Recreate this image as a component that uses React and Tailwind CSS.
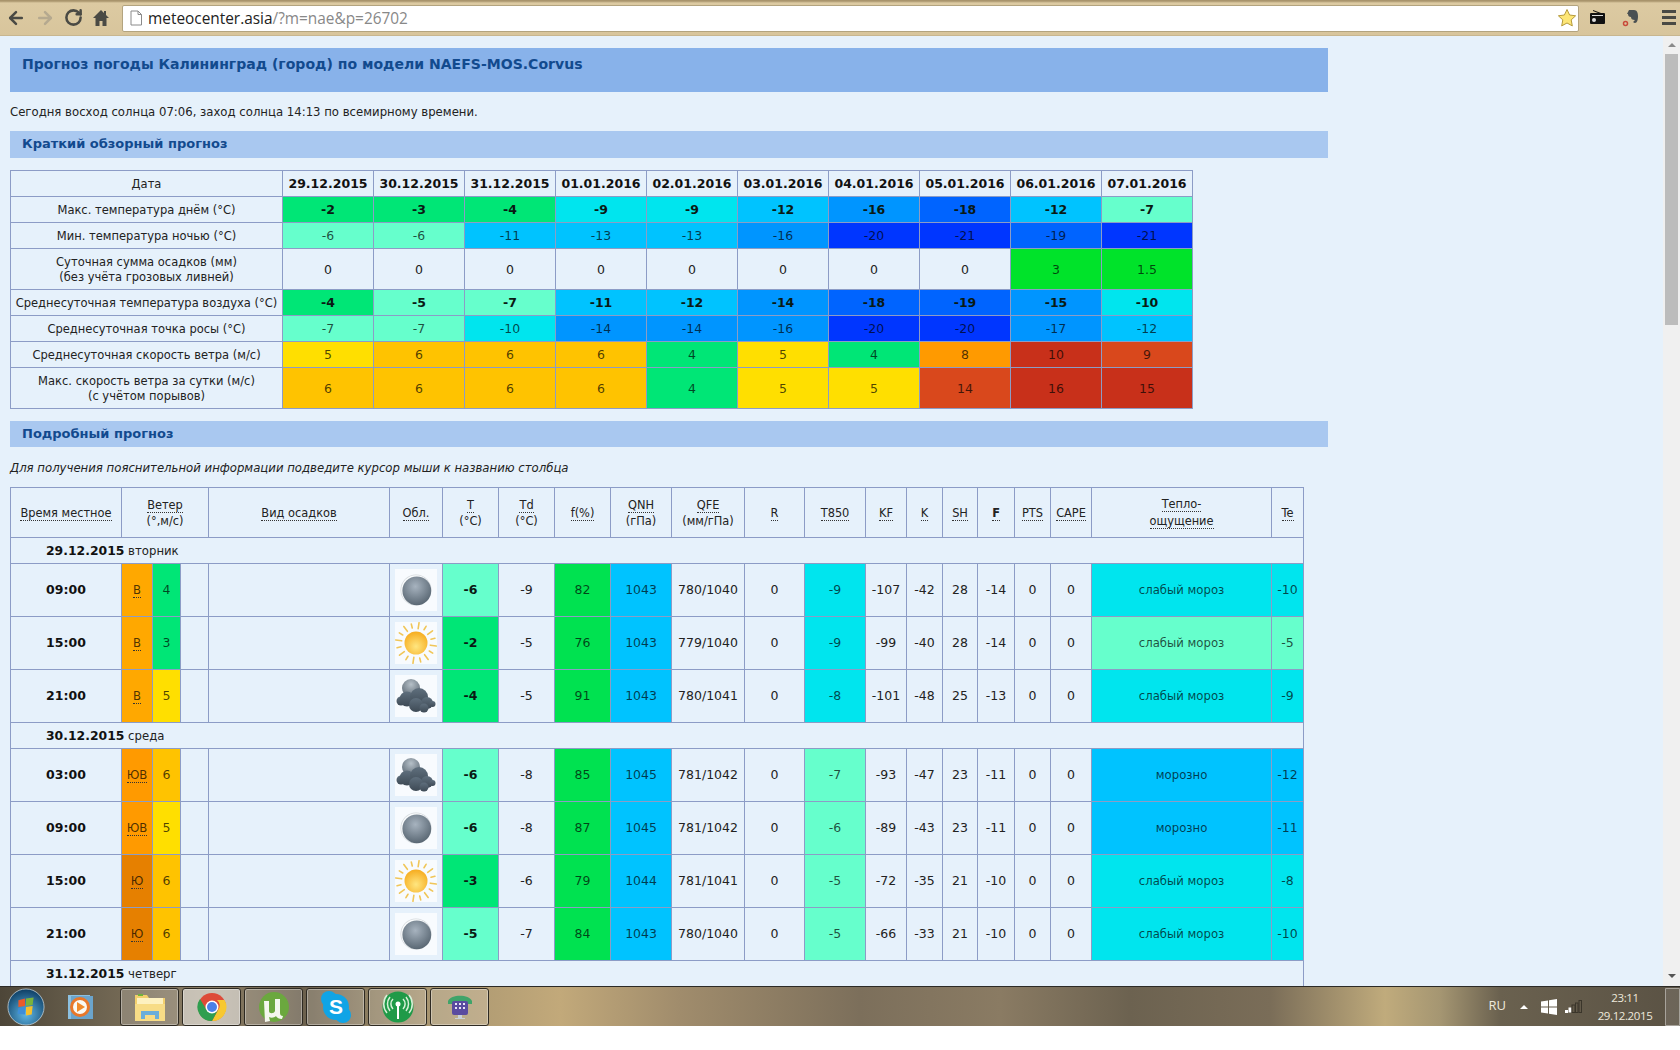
import React from 'react';
import { ArrowLeft, ArrowRight, RotateCw } from 'lucide-react';

const c = {
  g: 'bg-[#00e676]',
  a: 'bg-[#66ffcc]',
  n: 'bg-[#00e5ee]',
  s: 'bg-[#00c3ff]',
  b1: 'bg-[#0095ff]',
  b2: 'bg-[#0064ff]',
  nv: 'bg-[#0036ff]',
  v: 'bg-[#00e32a]',
  f: 'bg-[#00e250]',
  y: 'bg-[#ffdf00]',
  am: 'bg-[#ffc300]',
  o: 'bg-[#ff9a00]',
  o2: 'bg-[#ffa800]',
  o3: 'bg-[#e68000]',
  ro: 'bg-[#d9481c]',
  r: 'bg-[#c8301a]',
};

const dates = ['29.12.2015', '30.12.2015', '31.12.2015', '01.01.2016', '02.01.2016', '03.01.2016', '04.01.2016', '05.01.2016', '06.01.2016', '07.01.2016'];

const summary = [
  { title: ['Макс. температура днём (°С)'], bold: true, vals: [[-2, 'g'], [-3, 'g'], [-4, 'g'], [-9, 'n'], [-9, 'n'], [-12, 's'], [-16, 'b1'], [-18, 'b2'], [-12, 's'], [-7, 'a']] },
  { title: ['Мин. температура ночью (°С)'], vals: [[-6, 'a'], [-6, 'a'], [-11, 's'], [-13, 's'], [-13, 's'], [-16, 'b1'], [-20, 'nv'], [-21, 'nv'], [-19, 'b2'], [-21, 'nv']] },
  { title: ['Суточная сумма осадков (мм)', '(без учёта грозовых ливней)'], vals: [[0], [0], [0], [0], [0], [0], [0], [0], [3, 'v'], [1.5, 'v']] },
  { title: ['Среднесуточная температура воздуха (°С)'], bold: true, vals: [[-4, 'g'], [-5, 'a'], [-7, 'a'], [-11, 's'], [-12, 's'], [-14, 'b1'], [-18, 'b2'], [-19, 'b2'], [-15, 'b1'], [-10, 'n']] },
  { title: ['Среднесуточная точка росы (°С)'], vals: [[-7, 'a'], [-7, 'a'], [-10, 'n'], [-14, 'b1'], [-14, 'b1'], [-16, 'b1'], [-20, 'nv'], [-20, 'nv'], [-17, 'b1'], [-12, 's']] },
  { title: ['Среднесуточная скорость ветра (м/с)'], vals: [[5, 'y'], [6, 'am'], [6, 'am'], [6, 'am'], [4, 'g'], [5, 'y'], [4, 'g'], [8, 'o'], [10, 'r'], [9, 'ro']] },
  { title: ['Макс. скорость ветра за сутки (м/с)', '(с учётом порывов)'], vals: [[6, 'am'], [6, 'am'], [6, 'am'], [6, 'am'], [4, 'g'], [5, 'y'], [5, 'y'], [14, 'ro'], [16, 'r'], [15, 'r']] },
];

const widths = [111, 31, 28, 28, 181, 53, 56, 56, 56, 61, 73, 60, 61, 41, 36, 35, 37, 36, 41, 180, 32];

const days = [
  {
    date: '29.12.2015', name: 'вторник', rows: [
      ['09:00', 'В', 'o2', 4, 'g', 'moon', -6, 'a', -9, 82, 1043, '780/1040', -9, 'n', -107, -42, 28, -14, 'слабый мороз', 'n', -10],
      ['15:00', 'В', 'o2', 3, 'g', 'sun', -2, 'g', -5, 76, 1043, '779/1040', -9, 'n', -99, -40, 28, -14, 'слабый мороз', 'a', -5],
      ['21:00', 'В', 'o2', 5, 'y', 'cloud', -4, 'g', -5, 91, 1043, '780/1041', -8, 'n', -101, -48, 25, -13, 'слабый мороз', 'n', -9],
    ],
  },
  {
    date: '30.12.2015', name: 'среда', rows: [
      ['03:00', 'ЮВ', 'o', 6, 'am', 'cloud', -6, 'a', -8, 85, 1045, '781/1042', -7, 'a', -93, -47, 23, -11, 'морозно', 's', -12],
      ['09:00', 'ЮВ', 'o', 5, 'y', 'moon', -6, 'a', -8, 87, 1045, '781/1042', -6, 'a', -89, -43, 23, -11, 'морозно', 's', -11],
      ['15:00', 'Ю', 'o3', 6, 'am', 'sun', -3, 'g', -6, 79, 1044, '781/1041', -5, 'a', -72, -35, 21, -10, 'слабый мороз', 'n', -8],
      ['21:00', 'Ю', 'o3', 6, 'am', 'moon', -5, 'a', -7, 84, 1043, '780/1040', -5, 'a', -66, -33, 21, -10, 'слабый мороз', 'n', -10],
    ],
  },
  { date: '31.12.2015', name: 'четверг', rows: [] },
];

const bd = 'border border-[#8c9cc6]';

function Abbr({ children, className }) {
  return <span className={`border-b border-dotted border-[#333] ${className || ''}`}>{children}</span>;
}

function Head({ top, bottom, colSpan, bold }) {
  return (
    <th colSpan={colSpan} className={`${bd} font-normal text-[11.400px] leading-[16px] align-middle px-0`}>
      <Abbr className={bold ? 'font-bold' : ''}>{top}</Abbr>
      {bottom && <div>{bottom}</div>}
    </th>
  );
}

function Moon() {
  return (
    <svg width="42" height="42" viewBox="0 0 42 42" className="block">
      <defs>
        <radialGradient id="moonG" cx="0.45" cy="0.35" r="0.7">
          <stop offset="0" stopColor="#a7b3bf" />
          <stop offset="1" stopColor="#54626e" />
        </radialGradient>
      </defs>
      <rect width="42" height="42" fill="#f8fbfe" />
      <circle cx="21" cy="21" r="15.500" fill="#d4d9dd" />
      <circle cx="21" cy="21" r="14.800" fill="#fafcfd" />
      <circle cx="21.800" cy="21.800" r="14.400" fill="url(#moonG)" />
    </svg>
  );
}

function Sun() {
  const rays = [];
  for (let i = 0; i < 16; i++) {
    const a = (i * Math.PI) / 8 + 0.15;
    const r1 = i % 2 ? 15.5 : 14.5;
    const r2 = i % 2 ? 19.5 : 20.5;
    rays.push(
      <line key={i} x1={21 + r1 * Math.cos(a)} y1={21 + r1 * Math.sin(a)} x2={21 + r2 * Math.cos(a)} y2={21 + r2 * Math.sin(a)} stroke="#f0c658" strokeWidth="1.6" strokeLinecap="round" />
    );
  }
  return (
    <svg width="42" height="42" viewBox="0 0 42 42" className="block">
      <defs>
        <radialGradient id="sunG" cx="0.5" cy="0.65" r="0.65">
          <stop offset="0" stopColor="#ffe680" />
          <stop offset="1" stopColor="#f6ac1f" />
        </radialGradient>
      </defs>
      <rect width="42" height="42" fill="#f8fbfe" />
      {rays}
      <circle cx="21" cy="21" r="11.500" fill="url(#sunG)" />
    </svg>
  );
}

function Cloud() {
  return (
    <svg width="42" height="42" viewBox="0 0 42 42" className="block">
      <defs>
        <radialGradient id="cloudG" cx="0.5" cy="0.3" r="0.7">
          <stop offset="0" stopColor="#b6c0c8" />
          <stop offset="1" stopColor="#5e6b76" />
        </radialGradient>
        <linearGradient id="cloudB" x1="0" y1="0" x2="0" y2="1">
          <stop offset="0" stopColor="#5f6f7d" />
          <stop offset="1" stopColor="#3e4a55" />
        </linearGradient>
      </defs>
      <rect width="42" height="42" fill="#f8fbfe" />
      <circle cx="16" cy="13" r="9" fill="url(#cloudG)" />
      <g fill="url(#cloudB)">
        <circle cx="6" cy="26" r="4.500" />
        <circle cx="12" cy="24" r="7.500" />
        <circle cx="24" cy="22" r="9" />
        <circle cx="32" cy="28" r="6" />
        <circle cx="37.500" cy="29" r="3" />
        <circle cx="21" cy="30" r="7" />
        <circle cx="29" cy="33" r="4.500" />
      </g>
    </svg>
  );
}

const Icons = { moon: Moon, sun: Sun, cloud: Cloud };

function Data({ bg, bold, label, children }) {
  const tone = bold ? 'text-[#0a1a14] font-bold' : bg ? 'text-black/70' : '';
  return <td className={`${bd} ${bg ? c[bg] : ''} ${tone} ${label ? 'text-[11.700px]' : 'text-[12.500px]'} text-center`}>{children}</td>;
}

function Row({ r }) {
  const [time, dir, dirBg, wind, windBg, icon, t, tBg, td, f, qnh, qfe, t850, t850Bg, kf, k, sh, ff, feel, feelBg, te] = r;
  const Icon = Icons[icon];
  return (
    <tr>
      <td className={`${bd} h-[53px] text-center font-bold text-[12.500px] text-[#111]`}>{time}</td>
      <Data bg={dirBg} label><Abbr>{dir}</Abbr></Data>
      <Data bg={windBg}>{wind}</Data>
      <td className={`${bd} border-l-0`}></td>
      <td className={bd}></td>
      <td className={bd}><div className="flex justify-center"><Icon /></div></td>
      <Data bg={tBg} bold>{t}</Data>
      <Data>{td}</Data>
      <Data bg="f">{f}</Data>
      <Data bg="s">{qnh}</Data>
      <Data>{qfe}</Data>
      <Data>0</Data>
      <Data bg={t850Bg}>{t850}</Data>
      <Data>{kf}</Data>
      <Data>{k}</Data>
      <Data>{sh}</Data>
      <Data>{ff}</Data>
      <Data>0</Data>
      <Data>0</Data>
      <Data bg={feelBg} label>{feel}</Data>
      <Data bg={feelBg}>{te}</Data>
    </tr>
  );
}

function Toolbar() {
  return (
    <div className="h-[36px] shrink-0 flex items-center bg-[linear-gradient(#a8946c_0,#a8946c_1px,#dccaa2_3px,#d8c59c_100%)] border-b border-[#c8b68f] relative">
      <div className="w-[122px] flex items-center pl-[6px] gap-[9px] text-[#4a4a44]">
        <ArrowLeft size={20} strokeWidth={3} />
        <ArrowRight size={20} strokeWidth={3} className="text-[#b5a98f]" />
        <RotateCw size={19} strokeWidth={3.2} />
        <svg width="18" height="18" viewBox="0 0 18 18"><path d="M9 1 1 9h2.500v8h4v-5h3v5h4V9H17l-3-3V2h-2v2z" fill="#4a4a44" /></svg>
      </div>
      <div className="w-[1457px] h-[27px] mt-[1px] bg-white border border-[#b3a47f] rounded-[2px] flex items-center pl-[6px] font-['Open_Sans',sans-serif] text-[15.400px]">
        <svg width="14" height="16" viewBox="0 0 14 16" className="mr-[5px]"><path d="M2 1h7l3.500 3.500V15H2z M9 1v3.500h3.500" fill="#fff" stroke="#8a8a8a" /></svg>
        <span className="text-[#222] pt-[1px]">meteocenter.asia</span>
        <span className="text-[#888] pt-[1px]">/?m=nae&amp;p=26702</span>
        <svg width="20" height="20" viewBox="0 0 20 20" className="ml-auto mr-[1px]"><path d="M10 1.500l2.600 5.500 6 .8-4.400 4.100 1.100 6L10 15l-5.300 2.900 1.100-6L1.400 7.800l6-.8z" fill="#fde676" stroke="#b59a3c" /></svg>
      </div>
      <div className="flex-1 flex items-center pl-[11px] gap-[17px]">
        <svg width="15" height="15" viewBox="0 0 15 15"><path d="M3 0l8 3h3a1 1 0 0 1 1 1v9a1 1 0 0 1-1 1H1a1 1 0 0 1-1-1V4a1 1 0 0 1 1-1h7L3 1z" fill="#111" /><circle cx="4" cy="10" r="2" fill="#ddd" /><rect x="2" y="5" width="11" height="1" fill="#ddd" /></svg>
        <svg width="18" height="18" viewBox="0 0 18 18"><path d="M7 1h5c3 0 4 3 4 6 0 4-1 7-3 7-1.500 0-2-1-1.500-1.500L13 11c-3 0-4-1-4-3-2 0-3-1-3-3H5z" fill="#4a5052" /><circle cx="3.500" cy="14.500" r="2" fill="none" stroke="#c84a3a" strokeWidth="1.500" /></svg>
        <div className="w-[14px] ml-[5px] flex flex-col gap-[3px]">
          <div className="h-[3px] bg-[#4a4a44]" />
          <div className="h-[3px] bg-[#4a4a44]" />
          <div className="h-[3px] bg-[#4a4a44]" />
        </div>
      </div>
    </div>
  );
}

function Scrollbar() {
  return (
    <div className="w-[17px] shrink-0 bg-[#f0f0f0] flex flex-col items-center">
      <div className="h-[18px] flex items-center justify-center">
        <div className="w-0 h-0 border-x-[4px] border-x-transparent border-b-[4px] border-b-[#8a8a8a]" />
      </div>
      <div className="w-[13px] h-[271px] bg-[#bcbcbc]" />
      <div className="mt-auto h-[20px] flex items-center justify-center">
        <div className="w-0 h-0 border-x-[4px] border-x-transparent border-t-[4px] border-t-[#555]" />
      </div>
    </div>
  );
}

function TaskButton({ active, children }) {
  return (
    <div className={`w-[59px] h-[38px] rounded-[3px] border border-[#2e2a22] flex items-center justify-center shadow-[inset_0_0_0_1px_#ffffff55] ${active ? 'bg-[#ffffff88]' : 'bg-[#ffffff2e]'}`}>
      {children}
    </div>
  );
}

function Taskbar() {
  return (
    <div className="h-[40px] shrink-0 flex items-center border-t border-[#2c2a26] bg-[linear-gradient(90deg,#4d4638_0,#6d6350_100px,#8d7f66_210px,#6a5f4c_300px,#a5936f_420px,#c2a97a_560px,#a08c6c_680px,#7c6f5b_860px,#8a7b63_1000px,#6c6250_1130px,#7a6d58_1270px,#c0ab7c_1385px,#a59672_1440px,#6a614f_1500px,#5a5244_1680px)] relative">
      <div className="w-[120px] flex items-center shrink-0">
        <svg width="38" height="38" viewBox="0 0 40 40" className="ml-[7px]">
          <defs>
            <radialGradient id="orb" cx="0.5" cy="0.7" r="0.7">
              <stop offset="0" stopColor="#5fb7e6" />
              <stop offset="1" stopColor="#0d3d63" />
            </radialGradient>
          </defs>
          <circle cx="20" cy="20" r="19" fill="url(#orb)" stroke="#c9d6dc" strokeWidth="0.8" />
          <path d="M12 13l7-2v8l-7 1z" fill="#ea5a2a" />
          <path d="M20 11l8-1-1 8-7 1z" fill="#7ab33c" />
          <path d="M12 21l7-1v8l-8-1z" fill="#3e8ed8" />
          <path d="M20 20l7-1-1 9-6 1z" fill="#f5c02c" />
        </svg>
        <svg width="26" height="28" viewBox="0 0 26 28" className="ml-[22px]">
          <rect x="1" y="2" width="22" height="24" fill="#8cc0e0" />
          <rect x="4" y="3" width="22" height="23" fill="#6ba4cc" />
          <circle cx="13" cy="14" r="8.500" fill="#f9f9f4" stroke="#e8772a" strokeWidth="3" />
          <path d="M10 9l8 5-8 5z" fill="#f08a2a" />
        </svg>
      </div>
      <div className="flex gap-[3px]">
        <TaskButton>
          <svg width="34" height="32" viewBox="0 0 34 32">
            <path d="M2 4h12l2 3h16v20H2z" fill="#f2cf6c" />
            <rect x="4" y="7" width="26" height="6" fill="#fdf1c0" />
            <rect x="2" y="13" width="30" height="17" fill="#f7dc86" />
            <path d="M8 28v-8h18v8h-4v-4H12v4z" fill="#69aedb" />
            <rect x="5" y="3" width="5" height="2" fill="#6fb13c" />
          </svg>
        </TaskButton>
        <TaskButton active>
          <svg width="30" height="30" viewBox="0 0 30 30">
            <circle cx="15" cy="15" r="14" fill="#dd4b39" />
            <path d="M27.500 8A14 14 0 0 1 15 29l6-11a7 7 0 0 0-1-10z" fill="#f7c830" />
            <path d="M3 7a14 14 0 0 0 12 22l6-11a7 7 0 0 1-12-1z" fill="#2f9e4f" />
            <circle cx="15" cy="15" r="6.500" fill="#fff" />
            <circle cx="15" cy="15" r="5" fill="#4a80e8" />
          </svg>
        </TaskButton>
        <TaskButton>
          <svg width="32" height="32" viewBox="0 0 32 32">
            <circle cx="16" cy="16" r="15" fill="#6ba83e" />
            <path d="M6 10h5v10c0 3 5 3 6 0V8h5v14c0 2 1 3 3 3l-1 3c-3 0-5-1-6-3-2 2-5 2-7 1l1 4-5 1z" fill="#f4f7ee" />
          </svg>
        </TaskButton>
        <TaskButton>
          <svg width="32" height="34" viewBox="0 0 32 34">
            <circle cx="9" cy="9" r="8" fill="#10a4e6" />
            <circle cx="23" cy="25" r="8" fill="#10a4e6" />
            <circle cx="16" cy="17" r="13" fill="#10a4e6" />
            <text x="16" y="24" textAnchor="middle" fontFamily="Liberation Sans, sans-serif" fontWeight="700" fontSize="21" fill="#fff">S</text>
          </svg>
        </TaskButton>
        <TaskButton>
          <svg width="32" height="32" viewBox="0 0 32 32">
            <circle cx="16" cy="16" r="15.500" fill="#1f9a48" />
            <circle cx="16" cy="13" r="2.500" fill="#fff" />
            <path d="M15 13h2v15h-2z" fill="#fff" />
            <g fill="none" stroke="#d8f0d8" strokeWidth="1.500">
              <path d="M11 8a7 7 0 0 0 0 10M21 8a7 7 0 0 1 0 10" />
              <path d="M8 6a11 11 0 0 0 0 14M24 6a11 11 0 0 1 0 14" />
              <path d="M5 4a14 14 0 0 0 0 18M27 4a14 14 0 0 1 0 18" />
            </g>
          </svg>
        </TaskButton>
        <TaskButton>
          <svg width="30" height="30" viewBox="0 0 30 30">
            <path d="M3 9c3-7 21-7 24 0v3h-6V9H9v3H3z" fill="#3fa46a" />
            <rect x="7" y="9" width="16" height="14" rx="2" fill="#5a4ba0" />
            <g fill="#e8e4f6">
              <rect x="10" y="11" width="2" height="2" /><rect x="14" y="11" width="2" height="2" /><rect x="18" y="11" width="2" height="2" />
              <rect x="10" y="15" width="2" height="2" /><rect x="14" y="15" width="2" height="2" /><rect x="18" y="15" width="2" height="2" />
            </g>
            <path d="M13 23h4v3h3v1h-10v-1h3z" fill="#c8d0d8" />
          </svg>
        </TaskButton>
      </div>
      <div className="ml-auto flex items-center text-[#eee9dc] font-['Open_Sans',sans-serif]">
        <span className="text-[13px] mr-[14px] -mt-[2px]">RU</span>
        <div className="w-0 h-0 border-x-[4px] border-x-transparent border-b-[4px] border-b-white mr-[13px]" />
        <svg width="16" height="16" viewBox="0 0 16 16" className="mr-[8px]"><path d="M0 2.500 7 1.500v6H0zM8 1.300 16 0v7.500H8zM0 8.500h7v6l-7-1zM8 8.500h8V16l-8-1.300z" fill="#fff" /></svg>
        <svg width="17" height="13" viewBox="0 0 17 13" className="mr-[13px]">
          <rect x="0" y="10" width="3" height="3" fill="#fff" />
          <rect x="3.500" y="7.500" width="3" height="5" fill="#fff" />
          <rect x="7" y="5" width="3" height="7.500" fill="none" stroke="#3a352a" />
          <rect x="10.500" y="3" width="2.500" height="9.500" fill="none" stroke="#3a352a" />
          <rect x="14" y="0.500" width="2.500" height="12" fill="none" stroke="#3a352a" />
        </svg>
        <div className="w-[60px] text-center text-[11.500px] tracking-[-0.4px] leading-[18px]">
          <div>23:11</div>
          <div>29.12.2015</div>
        </div>
        <div className="w-[15px] h-[38px] ml-[10px] border border-[#ffffff66] bg-[#ffffff1c] rounded-[1px]" />
      </div>
    </div>
  );
}

export default function App() {
  return (
    <div className="w-[1680px] h-[1050px] bg-white flex flex-col overflow-hidden font-['DejaVu_Sans',sans-serif] text-[11.700px] text-[#222]">
      <Toolbar />
      <div className="h-[950px] shrink-0 flex overflow-hidden bg-[#e6f1fb]">
        <div className="flex-1 pl-[10px] overflow-hidden">
          <div className="w-[1318px] h-[44px] mt-[12px] bg-[#88b2ea] pl-[12px] pt-[7px] font-bold text-[14.050px] leading-[18px] text-[#124a8e]">
            Прогноз погоды Калининград (город) по модели NAEFS-MOS.Corvus
          </div>
          <div className="mt-[12px] leading-[16px]">Сегодня восход солнца 07:06, заход солнца 14:13 по всемирному времени.</div>
          <div className="w-[1318px] h-[27px] mt-[11px] bg-[#a9c8f0] pl-[12px] font-bold text-[13px] leading-[25px] text-[#124a8e]">Краткий обзорный прогноз</div>

          <table className="mt-[12px] table-fixed border-collapse w-[1182px] leading-[15px]">
            <colgroup>
              <col className="w-[272px]" />
              {dates.map((d) => <col key={d} className="w-[91px]" />)}
            </colgroup>
            <tbody>
              <tr>
                <td className={`${bd} h-[26px] pt-[1px] text-center text-[11.500px]`}>Дата</td>
                {dates.map((d) => <td key={d} className={`${bd} text-center font-bold text-[12.500px] text-[#111]`}>{d}</td>)}
              </tr>
              {summary.map((row) => (
                <tr key={row.title[0]}>
                  <td className={`${bd} pt-[1px] text-center text-[11.500px] whitespace-nowrap ${row.title.length > 1 ? 'h-[41px]' : 'h-[26px]'}`}>
                    {row.title.map((t) => <div key={t}>{t}</div>)}
                  </td>
                  {row.vals.map(([v, col], i) => <Data key={i} bg={col} bold={row.bold}>{v}</Data>)}
                </tr>
              ))}
            </tbody>
          </table>

          <div className="w-[1318px] h-[26px] mt-[12px] bg-[#a9c8f0] pl-[12px] font-bold text-[13px] leading-[26px] text-[#124a8e]">Подробный прогноз</div>
          <div className="mt-[12px] leading-[18px] italic">Для получения пояснительной информации подведите курсор мыши к названию столбца</div>

          <table className="mt-[10px] table-fixed border-collapse w-[1293px] leading-[16px]">
            <colgroup>
              {widths.map((w, i) => <col key={i} style={{ width: w }} />)}
            </colgroup>
            <tbody>
              <tr className="h-[50px]">
                <Head top="Время местное" />
                <Head top="Ветер" bottom="(°,м/с)" colSpan={3} />
                <Head top="Вид осадков" />
                <Head top="Обл." />
                <Head top="T" bottom="(°C)" />
                <Head top="Td" bottom="(°C)" />
                <Head top="f(%)" />
                <Head top="QNH" bottom="(гПа)" />
                <Head top="QFE" bottom="(мм/гПа)" />
                <Head top="R" />
                <Head top="T850" />
                <Head top="KF" />
                <Head top="K" />
                <Head top="SH" />
                <Head top="F" bold />
                <Head top="PTS" />
                <Head top="CAPE" />
                <th className={`${bd} font-normal text-[11.400px] leading-[17px]`}>
                  <Abbr>Тепло-</Abbr><br /><Abbr>ощущение</Abbr>
                </th>
                <Head top="Te" />
              </tr>
              {days.map((day) => (
                <React.Fragment key={day.date}>
                  <tr>
                    <td colSpan={21} className={`${bd} h-[26px] pl-[35px]`}>
                      <b className="text-[12.400px] text-[#111]">{day.date}</b> {day.name}
                    </td>
                  </tr>
                  {day.rows.map((r) => <Row key={day.date + r[0]} r={r} />)}
                </React.Fragment>
              ))}
            </tbody>
          </table>
        </div>
        <Scrollbar />
      </div>
      <Taskbar />
    </div>
  );
}
